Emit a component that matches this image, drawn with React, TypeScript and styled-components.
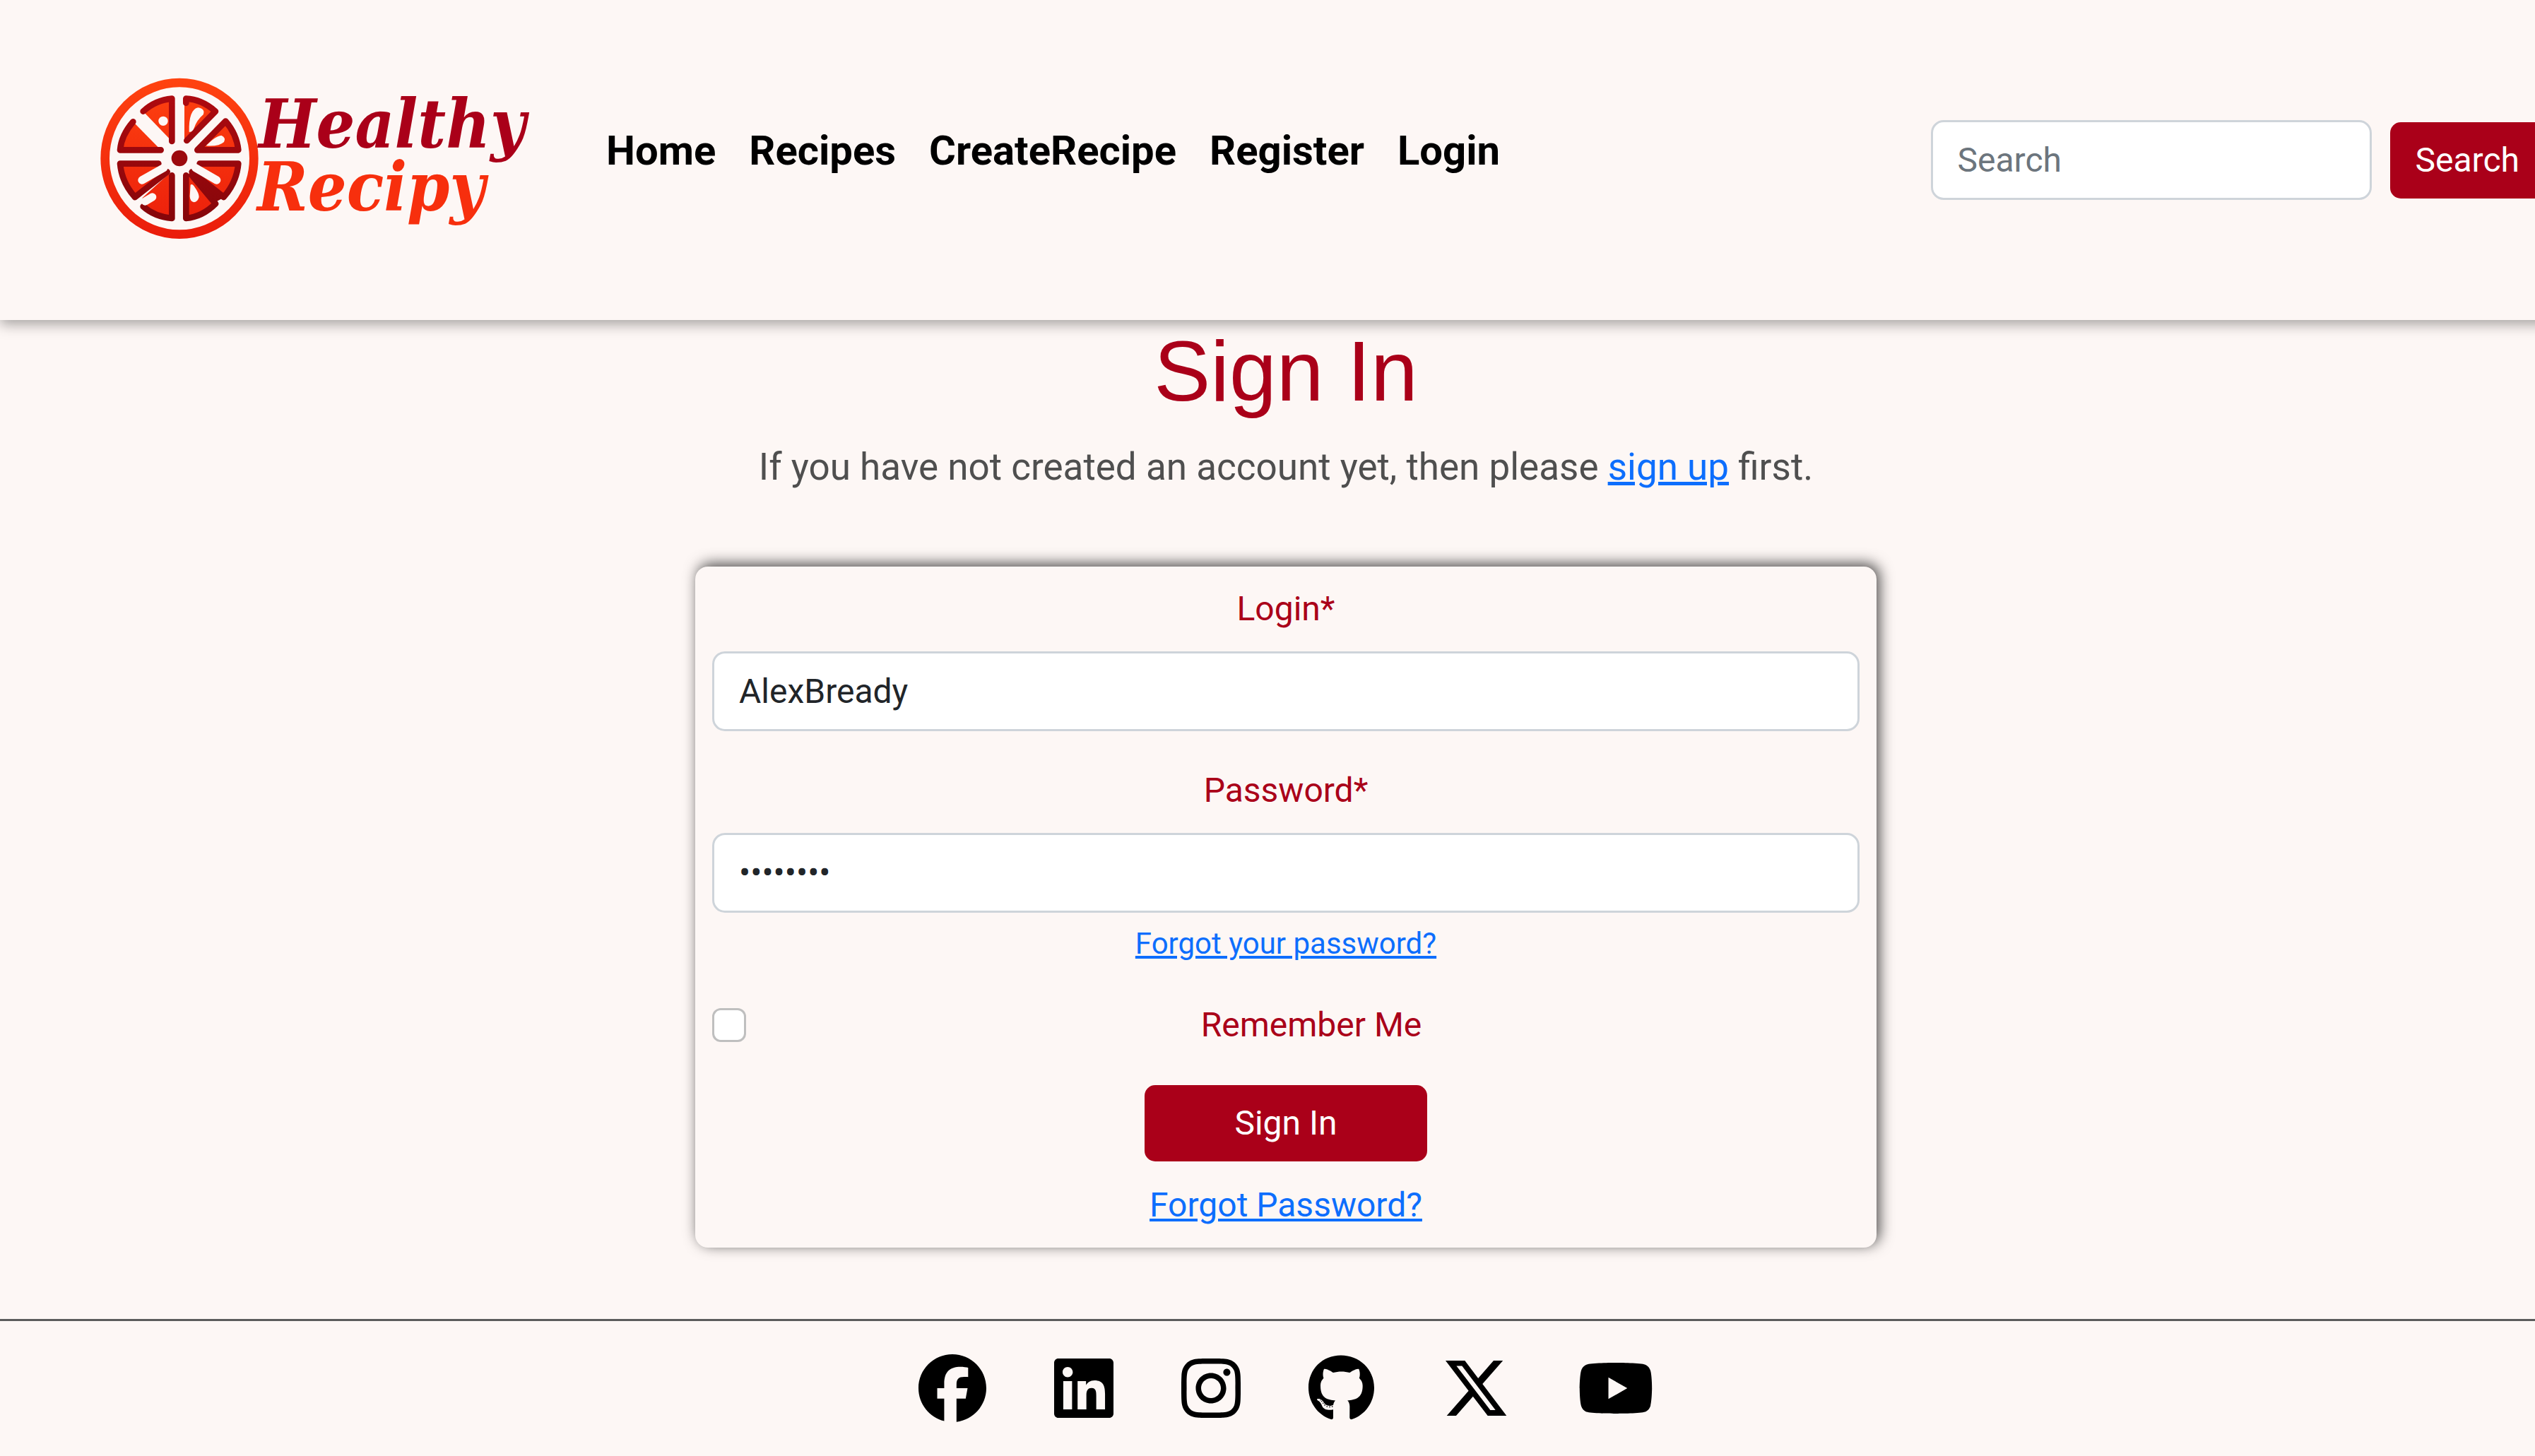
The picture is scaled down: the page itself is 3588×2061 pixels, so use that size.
import React from "react";
import styled, { createGlobalStyle } from "styled-components";
import {
  FaFacebook,
  FaGithub,
  FaInstagram,
  FaLinkedin,
  FaXTwitter,
  FaYoutube,
} from "react-icons/fa6";

const brand = "#aa0019";
const paper = "#fdf7f5";
const link = "#0d6efd";

const GlobalStyle = createGlobalStyle`
  *, *::before, *::after { box-sizing: border-box; }
  html { overflow-x: hidden; }
  body {
    margin: 0;
    overflow-x: hidden;
    background: ${paper};
    color: #212529;
    font-family: Roboto, "Liberation Sans", sans-serif;
    font-size: 48px;
    line-height: 72px;
  }
`;

const Page = styled.div`
  width: calc(100% + 52px);
`;

const Header = styled.header`
  display: flex;
  align-items: flex-start;
  height: 453px;
  padding: 96px 38px 0 132px;
  box-shadow: 0 6px 18px rgba(0, 0, 0, 0.35);
`;

const Brand = styled.a`
  display: block;
  margin-right: 96px;
  svg { display: block; }
`;

const Nav = styled.nav`
  display: flex;
  gap: 47px;
  padding-top: 74px;
`;

const NavLink = styled.a`
  color: #000;
  font-size: 58px;
  line-height: 87px;
  font-weight: 700;
  text-decoration: none;
`;

const SearchForm = styled.form`
  display: flex;
  align-items: center;
  gap: 26px;
  margin-left: auto;
  padding-top: 74px;
`;

const TextInput = styled.input`
  width: 100%;
  height: 113px;
  padding: 17px 35px;
  border: 3px solid #ced4da;
  border-radius: 18px;
  background: #fff;
  color: #212529;
  font: inherit;
  &::placeholder { color: #6c757d; opacity: 1; }
`;

const SearchInput = styled(TextInput)`
  width: 624px;
`;

const Button = styled.button<{ $wide?: boolean }>`
  width: ${(p) => (p.$wide ? "400px" : "auto")};
  padding: 18px 36px;
  border: 0;
  border-radius: 15px;
  background: ${brand};
  color: #fff;
  font: inherit;
`;

const Main = styled.main`
  display: flex;
  flex-direction: column;
  align-items: center;
  text-align: center;
`;

const Title = styled.h1`
  margin: 0;
  color: ${brand};
  font: 400 120px/144px "Liberation Sans", Arial, sans-serif;
`;

const Lead = styled.p`
  margin: 24px 0 101px;
  color: #4f4f4f;
  font-size: 53px;
  line-height: 80px;
`;

const Anchor = styled.a`
  color: ${link};
`;

const Card = styled.form`
  display: flex;
  flex-direction: column;
  width: 1672px;
  padding: 24px;
  border-radius: 18px;
  background: ${paper};
  box-shadow: 4px -4px 20px rgba(0, 0, 0, 0.7);
`;

const Field = styled.div`
  display: flex;
  flex-direction: column;
  margin-bottom: 48px;
`;

const Label = styled.label`
  color: ${brand};
`;

const FieldLabel = styled(Label)`
  margin-bottom: 24px;
`;

const Help = styled.div`
  margin-top: 12px;
  font-size: 42px;
  line-height: 63px;
`;

const Check = styled.div`
  display: flex;
  gap: 24px;
  align-items: center;
  label { flex: 1; }
`;

const Checkbox = styled.input`
  appearance: none;
  width: 48px;
  height: 48px;
  margin: 0;
  border: 3px solid #bfbfbf;
  border-radius: 12px;
  background: #fff;
`;

const Actions = styled.div`
  display: flex;
  flex-direction: column;
  align-items: center;
  gap: 26px;
  margin-top: 49px;
`;

const Footer = styled.footer`
  display: flex;
  justify-content: center;
  gap: 96px;
  margin-top: 101px;
  padding: 47px 0 48px;
  border-top: 3px solid #5c5c5c;
`;

const SocialLink = styled.a<{ $width: number }>`
  display: block;
  color: #000;
  svg {
    display: block;
    width: ${(p) => p.$width}px;
    height: 96px;
  }
`;

const socials = [
  { name: "Facebook", Icon: FaFacebook, width: 96 },
  { name: "LinkedIn", Icon: FaLinkedin, width: 84 },
  { name: "Instagram", Icon: FaInstagram, width: 84 },
  { name: "GitHub", Icon: FaGithub, width: 93 },
  { name: "X", Icon: FaXTwitter, width: 96 },
  { name: "YouTube", Icon: FaYoutube, width: 108 },
];

const pulp = [
  "M203 158 Q255 110 325 104 V285 Z",
  "M378 104 Q450 106 510 158 L388 282 H378 Z",
  "M553 200 Q600 255 607 322 H433 Z",
  "M160 202 Q110 260 105 322 H278 Z",
  "M270 380 H105 Q112 460 168 522 L305 415 Z",
  "M200 525 L310 425 H325 V612 Q250 605 203 562 Z",
  "M385 430 V612 Q455 605 510 550 L400 420 Z",
  "M443 380 H607 Q600 460 545 522 L415 415 Z",
];

const membranes = [
  "M203 158 Q255 110 325 104 V285",
  "M385 122 V104 Q450 106 510 158 L388 282",
  "M553 200 Q600 255 607 322 H433 Z",
  "M160 202 Q110 260 105 322 H278",
  "M268 380 H105 Q112 460 168 522 L305 415",
  "M203 562 Q250 605 325 612 V430",
  "M385 430 V612 Q455 605 510 550 L410 430",
  "M443 380 H607 Q600 460 545 522 L410 415",
];

const Logo = () => (
  <svg width="630" height="258" viewBox="132 96 630 258" role="img" aria-label="Healthy Recipy">
    <defs>
      <linearGradient id="rind" gradientUnits="userSpaceOnUse" x1="0" y1="20" x2="0" y2="700">
        <stop offset="0" stopColor="#ff4310" />
        <stop offset="1" stopColor="#ea1c0b" />
      </linearGradient>
      <linearGradient id="membrane" gradientUnits="userSpaceOnUse" x1="0" y1="90" x2="0" y2="625">
        <stop offset="0" stopColor="#ae0a10" />
        <stop offset="1" stopColor="#85060a" />
      </linearGradient>
    </defs>
    <g transform="translate(135 105) scale(0.3333)" strokeLinejoin="round" strokeLinecap="round">
      <ellipse cx="357" cy="358" rx="316" ry="322" fill="none" stroke="url(#rind)" strokeWidth="38" />
      {pulp.map((d) => <path key={d} d={d} fill="url(#rind)" />)}
      <g fill="none" stroke="url(#membrane)" strokeWidth="26">
        {membranes.map((d) => <path key={d} d={d} />)}
      </g>
      <path d="M404 440 L425 424 L545 524 L500 548 Z" fill="url(#membrane)" />
      <g fill={paper}>
        <circle cx="288" cy="199" r="20" />
        <path d="M398 245 Q396 150 436 142 Q468 148 458 172 Q430 195 418 232 Q410 248 398 245 Z" />
        <path d="M470 304 Q510 262 535 260 Q556 270 546 288 Q525 308 470 304 Z" />
        <path d="M404 470 Q412 464 422 480 Q440 505 440 522 Q434 544 418 544 Q402 540 401 518 Z" />
      </g>
      <g fill="none" stroke={paper} strokeWidth="34">
        <path d="M198 450 L290 398" />
        <path d="M425 398 L515 450" />
        <path d="M212 540 L242 522" />
      </g>
      <circle cx="357" cy="357" r="34" fill="#9c0a0e" />
    </g>
    <g
      fontFamily="'DejaVu Serif Condensed', 'DejaVu Serif', serif"
      fontSize="96"
      fontWeight="700"
      fontStyle="italic"
    >
      <text x="366" y="209" fill={brand}>Healthy</text>
      <text x="364" y="298" fill="#f72f0d">Recipy</text>
    </g>
  </svg>
);

export default function App() {
  return (
    <>
      <GlobalStyle />
      <Page>
        <Header>
          <Brand href="#"><Logo /></Brand>
          <Nav>
            {["Home", "Recipes", "CreateRecipe", "Register", "Login"].map((n) => (
              <NavLink key={n} href="#">{n}</NavLink>
            ))}
          </Nav>
          <SearchForm>
            <SearchInput type="search" placeholder="Search" aria-label="Search" />
            <Button type="button">Search</Button>
          </SearchForm>
        </Header>
        <Main>
          <Title>Sign In</Title>
          <Lead>
            If you have not created an account yet, then please <Anchor href="#">sign up</Anchor> first.
          </Lead>
          <Card>
            <Field>
              <FieldLabel htmlFor="login">Login*</FieldLabel>
              <TextInput id="login" type="text" defaultValue="AlexBready" />
            </Field>
            <Field>
              <FieldLabel htmlFor="password">Password*</FieldLabel>
              <TextInput id="password" type="password" defaultValue="password" />
              <Help><Anchor href="#">Forgot your password?</Anchor></Help>
            </Field>
            <Check>
              <Checkbox id="remember" type="checkbox" />
              <Label htmlFor="remember">Remember Me</Label>
            </Check>
            <Actions>
              <Button type="button" $wide>Sign In</Button>
              <Anchor href="#">Forgot Password?</Anchor>
            </Actions>
          </Card>
        </Main>
        <Footer>
          {socials.map(({ name, Icon, width }) => (
            <SocialLink key={name} href="#" aria-label={name} $width={width}><Icon /></SocialLink>
          ))}
        </Footer>
      </Page>
    </>
  );
}
